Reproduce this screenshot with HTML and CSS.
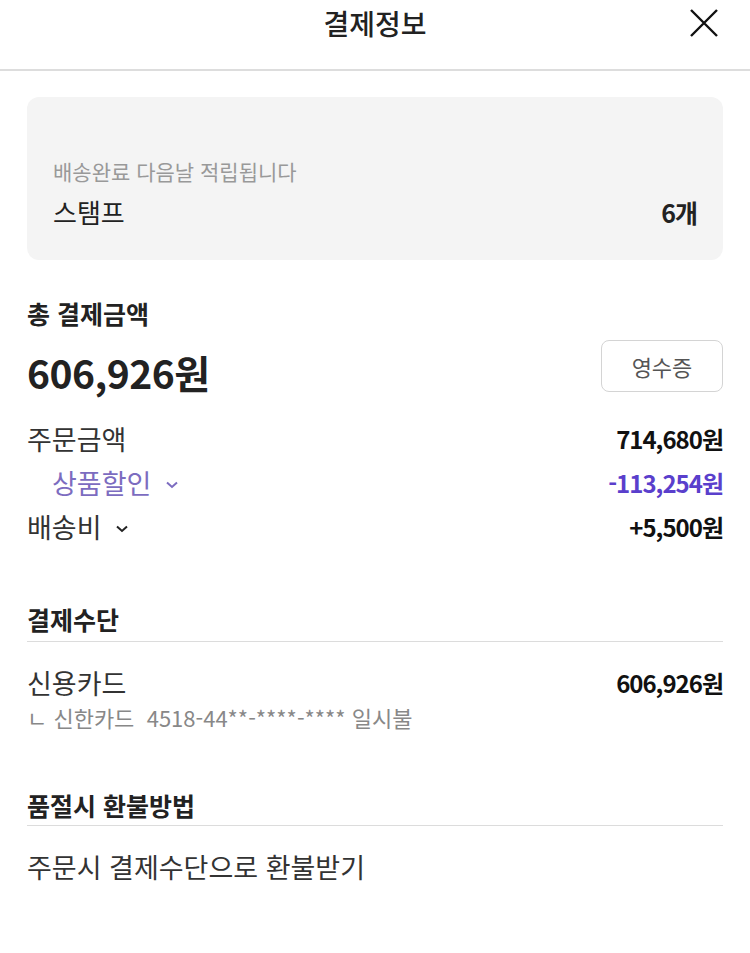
FILE: index.html
```html
<!DOCTYPE html>
<html lang="ko">
<head>
    <meta charset="UTF-8">
    <meta name="viewport" content="width=device-width, initial-scale=1.0">
    <title>결제정보</title>
    <link rel="stylesheet" href="styles.css">
</head>
<body>
    <header class="topo">
        <h1 class="titulo">결제정보</h1>
        <button class="fechar" aria-label="닫기">
            <svg width="30" height="30" viewBox="0 0 30 30"><path d="M2 2 L28 28 M28 2 L2 28" stroke="#111" stroke-width="2.4" fill="none"/></svg>
        </button>
    </header>

    <div class="conteudo">
        <div class="cartao">
            <p class="aviso">배송완료 다음날 적립됩니다</p>
            <div class="linha-cartao">
                <span>스탬프</span>
                <strong>6개</strong>
            </div>
        </div>

        <!-- total -->
        <h2 class="secao">총 결제금액</h2>
        <div class="total">
            <span class="valor-total">606,926원</span>
            <button class="recibo">영수증</button>
        </div>

        <div class="linha">
            <span>주문금액</span>
            <strong>714,680원</strong>
        </div>
        <div class="linha desconto">
            <span>상품할인 <svg class="seta" width="14" height="10" viewBox="0 0 14 10"><path d="M2 2.5 L7 7 L12 2.5" stroke="#7c6cc0" stroke-width="2" fill="none"/></svg></span>
            <strong>-113,254원</strong>
        </div>
        <div class="linha">
            <span>배송비 <svg class="seta" width="14" height="10" viewBox="0 0 14 10"><path d="M2 2.5 L7 7 L12 2.5" stroke="#222" stroke-width="2" fill="none"/></svg></span>
            <strong>+5,500원</strong>
        </div>

        <!-- pagamento -->
        <h2 class="secao com-linha pagamento">결제수단</h2>
        <div class="linha cartao-credito">
            <span>신용카드</span>
            <strong>606,926원</strong>
        </div>
        <p class="detalhe">ㄴ 신한카드&nbsp;&nbsp;4518-44**-****-**** 일시불</p>

        <!-- reembolso -->
        <h2 class="secao com-linha reembolso">품절시 환불방법</h2>
        <p class="texto">주문시 결제수단으로 환불받기</p>
    </div>
</body>
</html>
```

FILE: styles.css
```css
body {
    margin: 0;
    font-family: "Noto Sans CJK KR", "Noto Sans", sans-serif;
    color: #222;
    background-color: white;
}
.topo {
    height: 69px;
    border-bottom: 2px solid #ddd;
    display: flex;
    justify-content: center;
    align-items: center;
    position: relative;
}
.titulo {
    margin: 0;
    font-size: 28px;
    font-weight: 500;
    line-height: 48px;
    margin-top: -24px;
}
.fechar {
    position: absolute;
    top: 8px;
    right: 31px;
    background: none;
    border: none;
    padding: 0;
    cursor: pointer;
}
.fechar svg {
    display: block;
}
.conteudo {
    padding: 0 27px;
}
.cartao {
    margin-top: 26px;
    background-color: #f4f4f4;
    border-radius: 12px;
    padding: 60px 26px 33px;
}
.aviso {
    margin: 0;
    font-size: 21px;
    line-height: 28px;
    color: #999;
}
.linha-cartao {
    display: flex;
    justify-content: space-between;
    font-size: 26px;
    line-height: 30px;
    margin-top: 12px;
}
.linha-cartao strong {
    font-weight: 700;
    font-size: 25px;
    letter-spacing: -1px;
}
.secao {
    margin: 39px 0 0;
    font-size: 25px;
    font-weight: 700;
    line-height: 28px;
}
.total {
    display: flex;
    justify-content: space-between;
    align-items: flex-start;
    margin-top: 13px;
}
.valor-total {
    font-size: 39px;
    font-weight: 700;
    line-height: 64px;
    letter-spacing: -0.5px;
}
.recibo {
    width: 122px;
    height: 52px;
    border: 1px solid #d4d4d4;
    border-radius: 8px;
    background: white;
    color: #555;
    font-size: 22px;
    font-family: "Noto Sans CJK KR", sans-serif;
}
.linha {
    display: flex;
    justify-content: space-between;
    align-items: center;
    font-size: 27px;
    line-height: 44px;
    color: #333;
}
.total + .linha {
    margin-top: 13px;
}
.linha strong {
    font-size: 24px;
    font-weight: 700;
    color: #111;
    letter-spacing: -1px;
}
.seta {
    margin-left: 6px;
    vertical-align: 4px;
}
.desconto span {
    padding-left: 25px;
    color: #7c6cc0;
}
.desconto strong {
    color: #5a3fcc;
}
.com-linha {
    padding-bottom: 8px;
    border-bottom: 1px solid #dcdcdc;
}
.pagamento {
    margin-top: 56px;
}
.cartao-credito {
    margin-top: 23px;
    line-height: 36px;
}
.detalhe {
    margin: 0;
    font-size: 22px;
    line-height: 32px;
    color: #888;
}
.reembolso {
    margin-top: 58px;
    padding-bottom: 6px;
}
.texto {
    margin: 23px 0 0;
    font-size: 27px;
    line-height: 36px;
    color: #333;
}
```
